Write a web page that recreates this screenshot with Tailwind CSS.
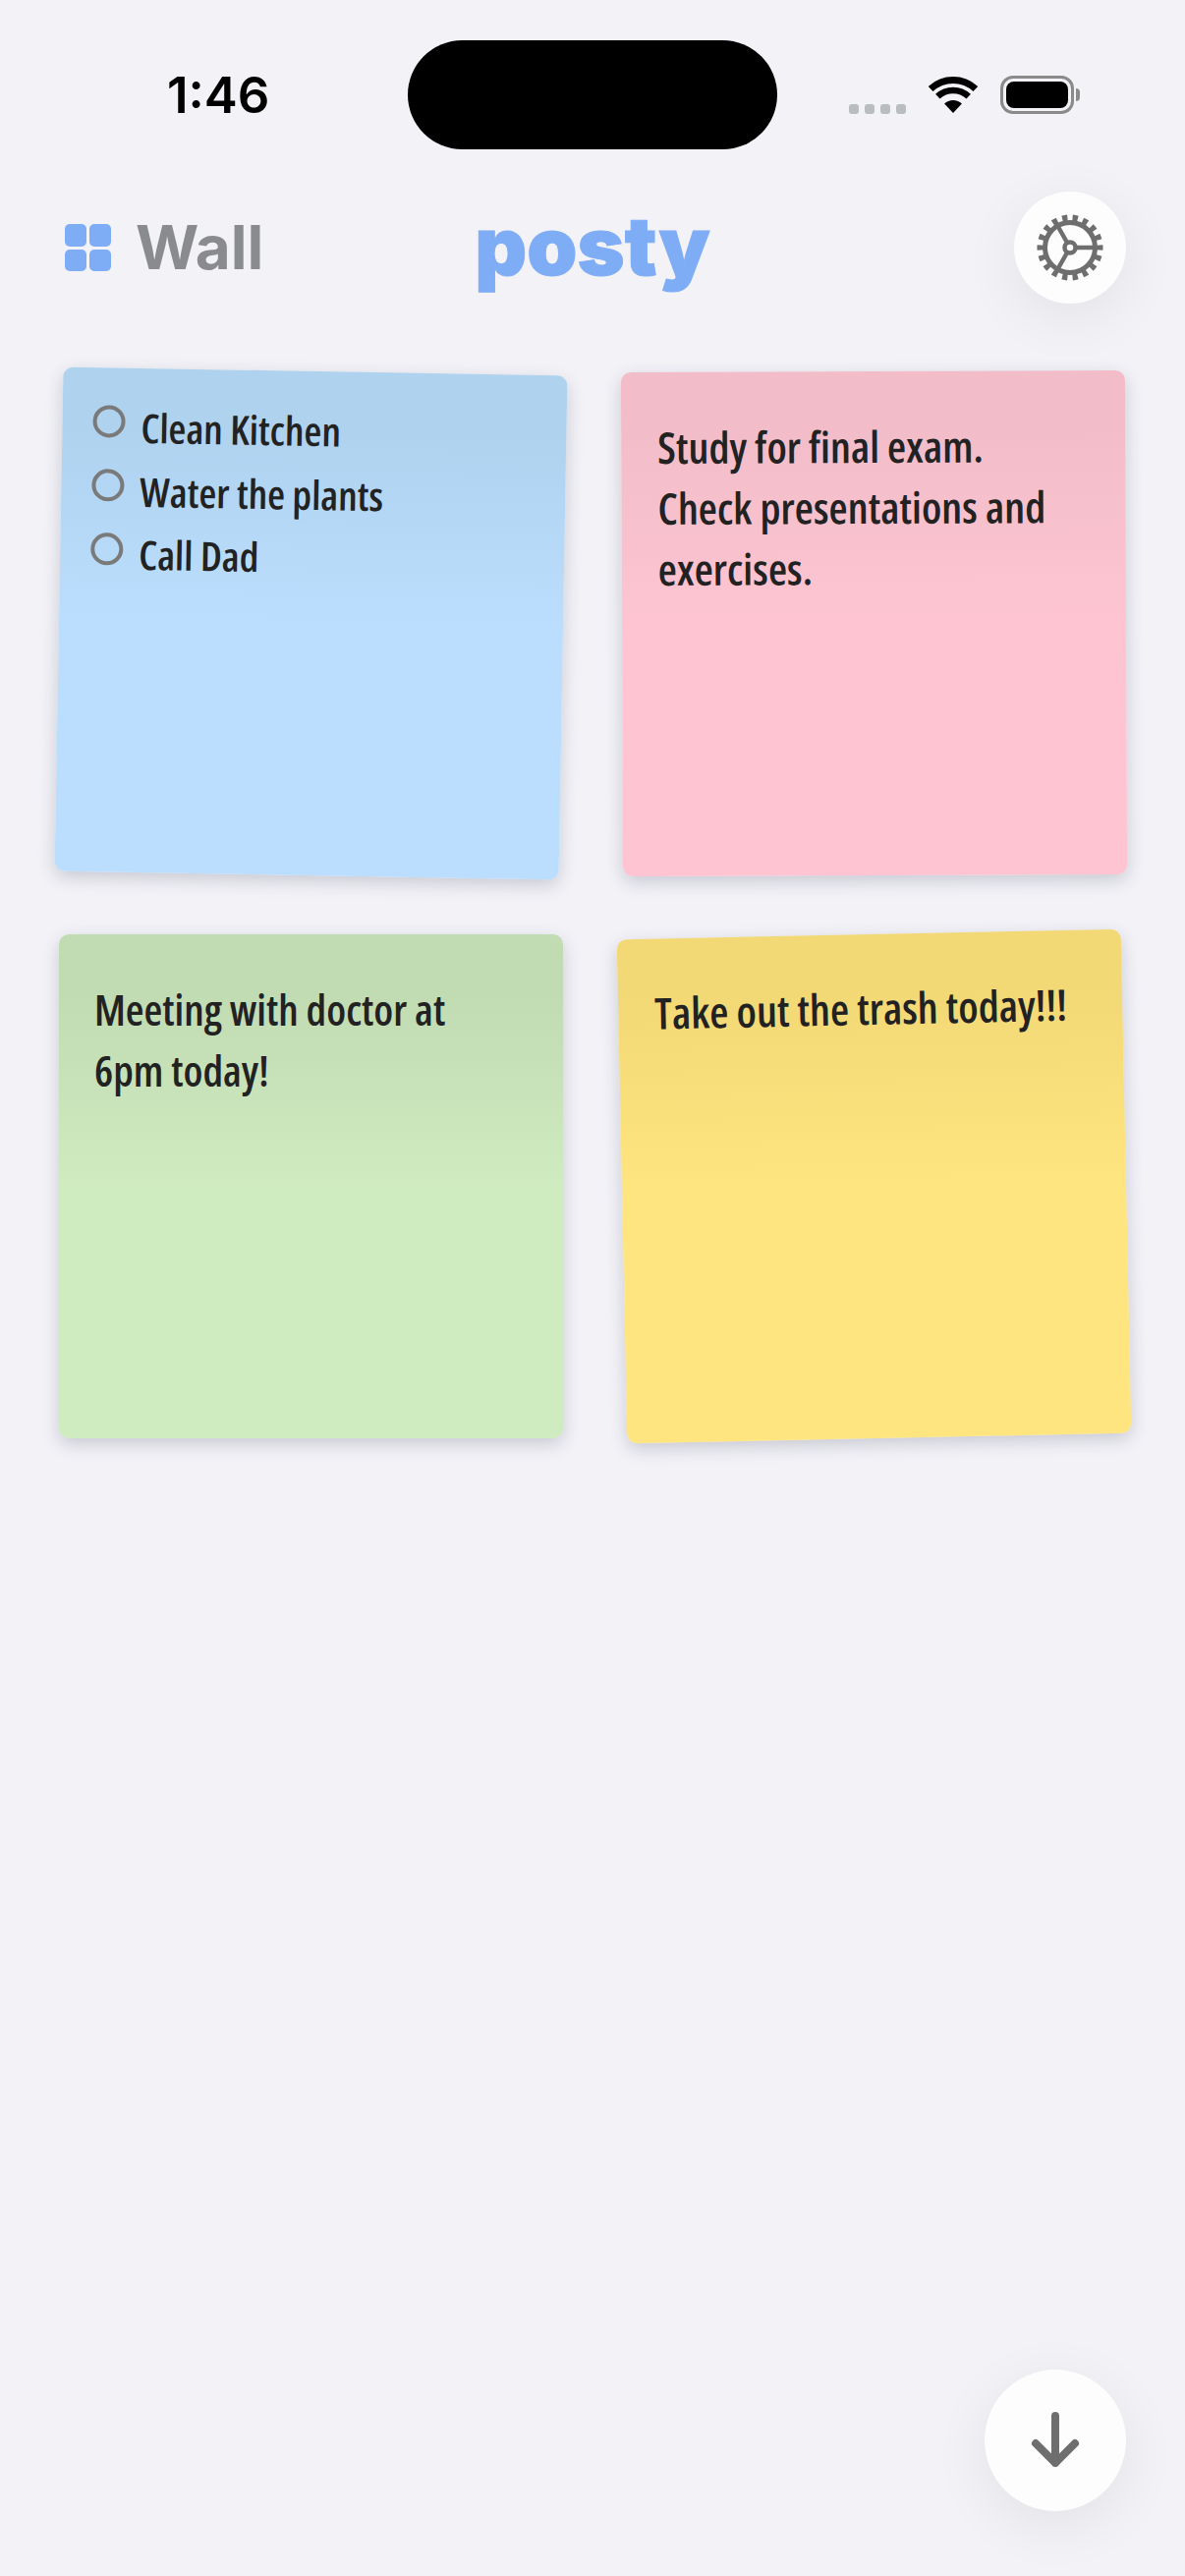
<!DOCTYPE html>
<html lang="en">
<head>
  <meta charset="UTF-8" />
  <title>posty</title>
  <script src="https://cdn.jsdelivr.net/npm/@tailwindcss/browser@4"></script>
</head>
<body class="bg-[#f2f2f7] [font-family:Inter,sans-serif]">
  <div class="relative w-[1206px] h-[2622px] overflow-hidden pt-[41px]">

    <!-- status bar -->
    <div class="flex items-center h-[111px]">
      <span class="ml-[170px] w-[245px] text-[51px] leading-none font-semibold text-black">1:46</span>
      <div class="w-[376px] h-[111px] rounded-[56px] bg-black"></div>
      <div class="ml-[73px] flex gap-[6px] mt-[29px]">
        <span class="w-[10px] h-[10px] rounded-[3px] bg-[#b9bdc0]"></span>
        <span class="w-[10px] h-[10px] rounded-[3px] bg-[#b9bdc0]"></span>
        <span class="w-[10px] h-[10px] rounded-[3px] bg-[#b9bdc0]"></span>
        <span class="w-[10px] h-[10px] rounded-[3px] bg-[#b9bdc0]"></span>
      </div>
      <svg class="ml-[23px]" width="50" height="37" viewBox="0 0 50 37">
        <path d="M25 37L16.1 27.5A13 13 0 0 1 33.9 27.5Z" fill="#000" />
        <path d="M9.3 20.2A23 23 0 0 1 40.7 20.2" fill="none" stroke="#000" stroke-width="6.5" />
        <path d="M2.2 12.5A33.5 33.5 0 0 1 47.8 12.5" fill="none" stroke="#000" stroke-width="7" />
      </svg>
      <div class="ml-[23px] flex items-center">
        <div class="w-[75px] h-[39px] rounded-[13px] border-[3px] border-[#8a8a8a] p-[3px]">
          <div class="w-full h-full rounded-[8px] bg-black"></div>
        </div>
        <div class="ml-[2px] w-[4px] h-[13px] rounded-r-full bg-[#8a8a8a]"></div>
      </div>
    </div>

    <!-- header -->
    <div class="grid grid-cols-[1fr_auto_1fr] items-center h-[114px] mt-[43px] px-[60px]">
      <div class="flex items-center gap-[25px] ml-[6px]">
        <div class="grid grid-cols-2 gap-[3px] w-[47px] h-[48px]">
          <span class="rounded-[5px] bg-[#7fadf5]"></span>
          <span class="rounded-[5px] bg-[#7fadf5]"></span>
          <span class="rounded-[5px] bg-[#7fadf5]"></span>
          <span class="rounded-[5px] bg-[#7fadf5]"></span>
        </div>
        <span class="text-[62px] leading-none font-bold text-[#8a8b8f]">Wall</span>
      </div>
      <span class="text-[82px] leading-none font-black text-[#7fadf5] [-webkit-text-stroke:1px_#7fadf5] -mt-[2px]">posty</span>
      <div class="justify-self-end flex items-center justify-center w-[114px] h-[114px] rounded-full bg-[#fdfdfe] shadow-[0_14px_60px_rgba(0,0,0,0.07)]">
        <svg width="68" height="68" viewBox="0 0 68 68" fill="none" stroke="#6e6e6e">
          <circle cx="34" cy="34" r="30" stroke-width="7" pathLength="18" stroke-dasharray="0.5 0.5" stroke-dashoffset="0.25" />
          <circle cx="34" cy="34" r="25.5" stroke-width="5" />
          <circle cx="34" cy="34" r="5.5" stroke-width="4.5" />
          <path d="M41 34H58M30.5 40L22 55M30.5 28L22 13" stroke-width="4.5" />
        </svg>
      </div>
    </div>

    <!-- notes -->
    <div class="grid grid-cols-[513px_513px] gap-[60px] mt-[69px] pl-[60px] [font-family:'Open_Sans',sans-serif] [font-stretch:75%] font-semibold text-[#222]">
      <div class="h-[513px] rotate-[1deg] rounded-[10px] bg-linear-to-b from-[#afd2ef] from-12% to-[#bbdefe] to-50% shadow-[0_6px_18px_rgba(40,40,70,0.2)] pl-[31px] pt-[38px]">
        <div class="flex gap-[16px] h-[65px]">
          <span class="w-[33px] h-[33px] rounded-full border-4 border-[#7a7a7a]"></span>
          <span class="text-[41px] leading-[44px]">Clean Kitchen</span>
        </div>
        <div class="flex gap-[16px] h-[65px]">
          <span class="w-[33px] h-[33px] rounded-full border-4 border-[#7a7a7a]"></span>
          <span class="text-[41px] leading-[44px]">Water the plants</span>
        </div>
        <div class="flex gap-[16px] h-[65px]">
          <span class="w-[33px] h-[33px] rounded-full border-4 border-[#7a7a7a]"></span>
          <span class="text-[41px] leading-[42px]">Call Dad</span>
        </div>
      </div>

      <div class="h-[513px] -rotate-[0.25deg] rounded-[10px] bg-linear-to-b from-[#f2bdc9] from-12% to-[#fec4d2] to-50% shadow-[0_6px_18px_rgba(40,40,70,0.2)] pl-[37px] pr-[20px] pt-[45px] text-[44px] leading-[62px]">
        Study for final exam.<br />Check presentations and<br />exercises.
      </div>

      <div class="h-[513px] rounded-[10px] bg-linear-to-b from-[#c1dbb2] from-12% to-[#cfebc0] to-50% shadow-[0_6px_18px_rgba(40,40,70,0.2)] pl-[36px] pr-[20px] pt-[46px] text-[43px] leading-[62px]">
        Meeting with doctor at<br />6pm today!
      </div>

      <div class="h-[513px] -rotate-[1.2deg] rounded-[10px] bg-linear-to-b from-[#f2d976] from-12% to-[#ffe57f] to-50% shadow-[0_6px_18px_rgba(40,40,70,0.2)] pl-[37px] pr-[20px] pt-[44px] text-[44px] leading-[62px]">
        Take out the trash today!!!
      </div>
    </div>

    <!-- floating button -->
    <button class="absolute right-[60px] bottom-[66px] flex items-center justify-center w-[144px] h-[144px] rounded-full bg-[#fdfdfe] shadow-[0_14px_60px_rgba(0,0,0,0.07)]">
      <svg width="50" height="60" viewBox="0 0 50 60" fill="none" stroke="#6e6e6e" stroke-width="8" stroke-linecap="round" stroke-linejoin="round">
        <path d="M25 5V53M5 33L25 53L45 33" />
      </svg>
    </button>
  </div>
</body>
</html>
